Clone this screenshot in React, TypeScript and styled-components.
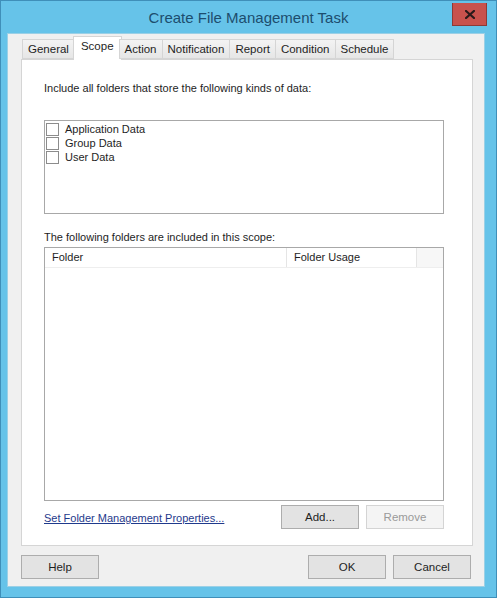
import styled, { createGlobalStyle } from 'styled-components';

const GlobalStyle = createGlobalStyle`
  html, body {
    margin: 0;
    padding: 0;
    background: #ffffff;
  }
  body {
    font-family: "Liberation Sans", Arial, sans-serif;
    font-size: 11px;
    color: #1e1e1e;
  }
`;

const tabs = ['General', 'Scope', 'Action', 'Notification', 'Report', 'Condition', 'Schedule'];
const dataKinds = ['Application Data', 'Group Data', 'User Data'];

export default function App() {
  return (
    <>
      <GlobalStyle />
      <Window>
        <TitleBar>
          <span />
          <Title>Create File Management Task</Title>
          <CloseButton aria-label="Close">
            <svg width="10" height="9" viewBox="0 0 10 9">
              <path d="M1 1 L9 8 M9 1 L1 8" stroke="#2a1a1a" strokeWidth="2.2" strokeLinecap="square" />
            </svg>
          </CloseButton>
        </TitleBar>

        <Client>
          <TabStrip>
            {tabs.map((tab) => (
              <Tab key={tab} $active={tab === 'Scope'}>
                {tab}
              </Tab>
            ))}
          </TabStrip>

          <Panel>
            <Label>Include all folders that store the following kinds of data:</Label>
            <CheckList>
              {dataKinds.map((kind) => (
                <CheckRow key={kind}>
                  <CheckBox />
                  {kind}
                </CheckRow>
              ))}
            </CheckList>

            <ScopeLabel>The following folders are included in this scope:</ScopeLabel>
            <ListView>
              <ListHeader>
                <HeaderCell $width={242}>Folder</HeaderCell>
                <HeaderCell $width={130}>Folder Usage</HeaderCell>
                <HeaderFiller />
              </ListHeader>
            </ListView>

            <PanelFooter>
              <Link href="#">Set Folder Management Properties...</Link>
              <ButtonGroup>
                <Button>Add...</Button>
                <Button disabled>Remove</Button>
              </ButtonGroup>
            </PanelFooter>
          </Panel>

          <DialogFooter>
            <Button>Help</Button>
            <ButtonGroup>
              <Button>OK</Button>
              <Button>Cancel</Button>
            </ButtonGroup>
          </DialogFooter>
        </Client>
      </Window>
    </>
  );
}

const Window = styled.div`
  width: 497px;
  height: 598px;
  box-sizing: border-box;
  background: #66c3e9;
  border: 1px solid #3f8fb9;
  display: flex;
  flex-direction: column;
`;

const TitleBar = styled.div`
  height: 32px;
  display: grid;
  grid-template-columns: 1fr auto 1fr;
  align-items: start;
`;

const Title = styled.div`
  font-family: "Liberation Sans", Arial, sans-serif;
  font-size: 15px;
  color: #1d4d6e;
  padding-top: 8px;
`;

const CloseButton = styled.div`
  justify-self: end;
  margin: 2px 9px 0 0;
  width: 35px;
  height: 23px;
  box-sizing: border-box;
  background: #c8524d;
  border: 1px solid #8e3a36;
  border-top: none;
  display: flex;
  align-items: center;
  justify-content: center;
`;

const Client = styled.div`
  flex: 1;
  margin: 0 11px 10px 6px;
  background: #f0f0f0;
  border: 1px solid #9bd0e6;
  display: flex;
  flex-direction: column;
  padding: 3px 11px 0 13px;
`;

const TabStrip = styled.div`
  display: flex;
  align-items: flex-end;
  height: 22px;
  padding-left: 2px;
  position: relative;
  z-index: 1;
`;

const Tab = styled.div<{ $active?: boolean }>`
  box-sizing: border-box;
  height: ${(p) => (p.$active ? '24px' : '20px')};
  margin: ${(p) => (p.$active ? '0 -2px -1px -2px' : '0')};
  padding: ${(p) => (p.$active ? '3px 7px 0' : '3px 5px 0')};
  background: ${(p) => (p.$active ? '#ffffff' : 'linear-gradient(#f3f3f3, #e6e6e6)')};
  border: 1px solid #d5d5d5;
  border-bottom: ${(p) => (p.$active ? 'none' : '1px solid #d5d5d5')};
  margin-left: ${(p) => (p.$active ? '-2px' : '-1px')};
  font-size: 11.5px;
  color: #1e1e1e;
  white-space: nowrap;
`;

const Panel = styled.div`
  height: 487px;
  box-sizing: border-box;
  background: #ffffff;
  border: 1px solid #d5d5d5;
  padding: 21px 28px 16px 22px;
  display: flex;
  flex-direction: column;
`;

const Label = styled.div`
  font-size: 11px;
  line-height: 14px;
  color: #1e1e1e;
`;

const CheckList = styled.div`
  margin-top: 25px;
  height: 95px;
  box-sizing: border-box;
  border: 1px solid #a8a8a8;
  padding: 1px 0 0 1px;
  display: flex;
  flex-direction: column;
`;

const CheckRow = styled.div`
  display: flex;
  align-items: center;
  gap: 6px;
  height: 14px;
  font-size: 11px;
  color: #1e1e1e;
`;

const CheckBox = styled.span`
  width: 13px;
  height: 13px;
  box-sizing: border-box;
  border: 1px solid #8c8c8c;
  background: #ffffff;
`;

const ScopeLabel = styled(Label)`
  margin-top: 16px;
`;

const ListView = styled.div`
  margin-top: 3px;
  height: 255px;
  box-sizing: border-box;
  border: 1px solid #a8a8a8;
`;

const ListHeader = styled.div`
  display: flex;
  height: 19px;
  border-bottom: 1px solid #eeeeee;
`;

const HeaderCell = styled.div<{ $width: number }>`
  width: ${(p) => p.$width}px;
  box-sizing: border-box;
  padding: 3px 0 0 7px;
  border-right: 1px solid #e5e5e5;
  font-size: 11px;
  color: #1e1e1e;
  background: #ffffff;
`;

const HeaderFiller = styled.div`
  flex: 1;
  background: #f7f7f7;
`;

const PanelFooter = styled.div`
  margin-top: 4px;
  display: flex;
  align-items: center;
  justify-content: space-between;
`;

const Link = styled.a`
  font-size: 11px;
  color: #1f3a8c;
  text-decoration: underline;
  padding-top: 2px;
`;

const ButtonGroup = styled.div`
  display: flex;
  gap: 7px;
`;

const Button = styled.button`
  width: 78px;
  height: 24px;
  box-sizing: border-box;
  font-family: "Liberation Sans", Arial, sans-serif;
  font-size: 11.5px;
  color: #1e1e1e;
  background: #e3e3e3;
  border: 1px solid #adadad;
  border-radius: 0;
  padding: 0;

  &:disabled {
    color: #9a9a9a;
    background: #f4f4f4;
    border-color: #d4d4d4;
  }
`;

const DialogFooter = styled.div`
  margin-top: 9px;
  display: flex;
  justify-content: space-between;
  padding-right: 2px;
`;
